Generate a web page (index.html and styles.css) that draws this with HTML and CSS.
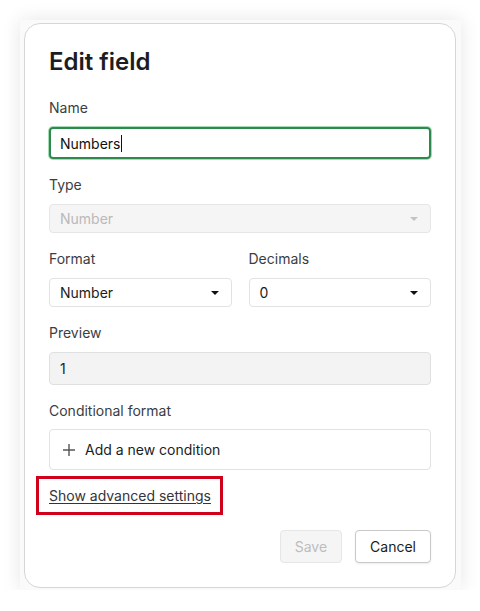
FILE: index.html
```html
<!DOCTYPE html>
<html lang="en">

<head>
    <meta charset="UTF-8">
    <meta name="viewport" content="width=device-width, initial-scale=1.0">
    <title>Edit field</title>
    <link rel="stylesheet" href="styles.css">
</head>

<body>
    <div class="backdrop">
        <div class="modal">
            <h2 class="modal-title">Edit field</h2>

            <div class="field">
                <label class="field-label">Name</label>
                <div class="input input-focus">Numbers<span class="text-caret"></span></div>
            </div>

            <div class="field">
                <label class="field-label">Type</label>
                <div class="select select-disabled">
                    <span>Number</span>
                    <span class="caret"></span>
                </div>
            </div>

            <div class="field-row">
                <div class="field">
                    <label class="field-label">Format</label>
                    <div class="select">
                        <span>Number</span>
                        <span class="caret"></span>
                    </div>
                </div>
                <div class="field">
                    <label class="field-label">Decimals</label>
                    <div class="select">
                        <span>0</span>
                        <span class="caret"></span>
                    </div>
                </div>
            </div>

            <div class="field">
                <label class="field-label">Preview</label>
                <div class="preview">1</div>
            </div>

            <div class="field field-last">
                <label class="field-label">Conditional format</label>
                <div class="condition-box">
                    <svg class="plus-icon" width="14" height="14" viewBox="0 0 14 14">
                        <path d="M7 1v12M1 7h12" stroke="#555" stroke-width="1.4" fill="none" />
                    </svg>
                    <span>Add a new condition</span>
                </div>
            </div>

            <div class="advanced">
                <span class="highlight"><a href="#" class="advanced-link">Show advanced settings</a></span>
            </div>

            <div class="modal-actions">
                <button class="btn btn-disabled" disabled>Save</button>
                <button class="btn">Cancel</button>
            </div>
        </div>
    </div>
</body>

</html>
```

FILE: styles.css
```css
* {
    box-sizing: border-box;
}

body {
    margin: 0;
    background: #fff;
    font-family: Inter, "Noto Sans", sans-serif;
    color: #1f2126;
}

.backdrop {
    width: 441px;
    height: 570px;
    margin: 20px 0 0 20px;
    padding: 3px 4px;
    background: #fafafa;
    box-shadow: 0 0 18px rgba(0, 0, 0, 0.1);
}

.modal {
    width: 432px;
    height: 565px;
    background: #fff;
    border: 1px solid #d6d6d6;
    border-radius: 16px;
    padding: 22px 24px 0 24px;
}

.modal-title {
    margin: 0 0 20px;
    font-size: 24px;
    line-height: 32px;
    font-weight: 600;
    color: #1b1d22;
}

.field {
    margin-bottom: 16px;
}

.field-last {
    margin-bottom: 6px;
}

.field-label {
    display: block;
    font-size: 14px;
    line-height: 20px;
    color: #3b3d42;
    margin-bottom: 9px;
}

.field-last .field-label {
    margin-bottom: 8px;
}

.field-row {
    display: grid;
    grid-template-columns: 1fr 1fr;
    gap: 17px;
}

.input {
    height: 32px;
    border-radius: 4px;
    padding: 0 9px;
    font-size: 14px;
    display: flex;
    align-items: center;
    color: #111;
}

.input-focus {
    border: 2px solid #2e8a4c;
    box-shadow: 0 0 0 1px #a7dbb6;
}

.text-caret {
    display: inline-block;
    width: 1px;
    height: 17px;
    background: #111;
    margin-left: 1px;
}

.select {
    height: 29px;
    border: 1px solid #e2e2e2;
    border-radius: 4px;
    padding: 0 12px 0 10px;
    display: flex;
    align-items: center;
    justify-content: space-between;
    font-size: 14px;
    color: #1b1d22;
}

.select-disabled {
    background: #f5f5f5;
    color: #b9b9b9;
    border-color: #e6e6e6;
}

.caret {
    width: 0;
    height: 0;
    border-left: 4px solid transparent;
    border-right: 4px solid transparent;
    border-top: 4px solid #111;
}

.select-disabled .caret {
    border-top-color: #c4c4c4;
}

.preview {
    height: 33px;
    background: #f3f3f3;
    border: 1px solid #e0e0e0;
    border-radius: 4px;
    padding: 0 10px;
    display: flex;
    align-items: center;
    font-size: 14px;
    color: #1b1d22;
}

.condition-box {
    height: 41px;
    border: 1px solid #e2e2e2;
    border-radius: 4px;
    padding: 0 12px;
    display: flex;
    align-items: center;
    gap: 9px;
    font-size: 14px;
    color: #1b1d22;
}

.advanced {
    height: 38px;
}

.highlight {
    display: inline-block;
    margin-left: -13px;
    padding: 6px 9px 6px 10px;
    border: 3px solid #d0021b;
    line-height: 20px;
}

.advanced-link {
    font-size: 14px;
    color: #33353a;
    text-decoration: underline;
    text-underline-offset: 2px;
}

.modal-actions {
    display: flex;
    justify-content: flex-end;
    gap: 13px;
    margin-top: 16px;
}

.btn {
    height: 33px;
    padding: 0 14px;
    font-family: Inter, "Noto Sans", sans-serif;
    font-size: 14px;
    background: #fff;
    border: 1px solid #c9c9c9;
    border-radius: 4px;
    color: #1b1d22;
    box-shadow: 0 1px 2px rgba(0, 0, 0, 0.08);
    cursor: pointer;
}

.btn-disabled {
    background: #f5f5f5;
    border-color: #e6e6e6;
    color: #bdbdbd;
    box-shadow: none;
    cursor: default;
}
```
